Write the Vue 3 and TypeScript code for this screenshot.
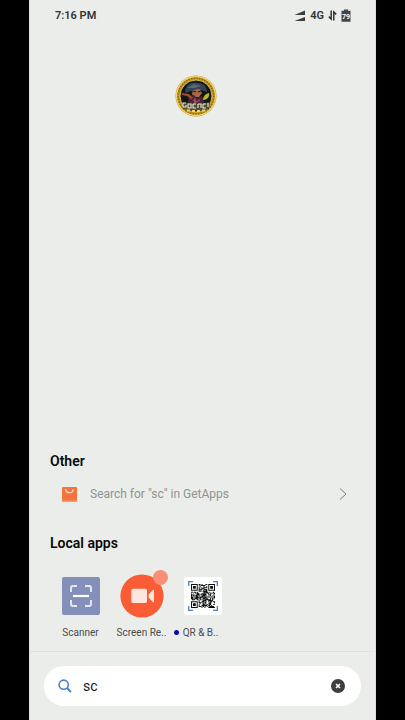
<script setup lang="ts">
import { ref } from 'vue'

const query = ref('sc')

const SIZE = 25

function finderModule(x: number, y: number): boolean | null {
  const corners = [[0, 0], [SIZE - 7, 0], [0, SIZE - 7]]
  for (const [cx, cy] of corners) {
    const dx = x - cx
    const dy = y - cy
    if (dx >= -1 && dx <= 7 && dy >= -1 && dy <= 7) {
      const ring = Math.max(Math.abs(dx - 3), Math.abs(dy - 3))
      return ring === 3 || ring <= 1
    }
  }
  return null
}

function buildQrPath(): string {
  let seed = 77
  let path = ''
  for (let y = 0; y < SIZE; y++) {
    for (let x = 0; x < SIZE; x++) {
      seed = (seed * 1103515245 + 12345) % 2147483648
      const finder = finderModule(x, y)
      const dark = finder === null ? seed / 2147483648 < 0.6 : finder
      if (dark) path += `M${x} ${y}h1v1h-1z`
    }
  }
  return path
}

const qrPath = buildQrPath()
</script>

<template>
  <div class="stage">
    <main class="phone">
      <header class="status">
        <span class="time">7:16 PM</span>
        <div class="indicators">
          <svg class="signal" viewBox="0 0 12 12" aria-hidden="true">
            <path d="M0.5 5L11 0.5V5zM0.5 11L11 7V11z" fill="#3b3e3c" />
          </svg>
          <span>4G</span>
          <svg class="data" viewBox="0 0 9 11" aria-hidden="true">
            <path d="M3.2 0.5V9L0.8 6.6M5.8 10.5V2L8.2 4.4" fill="none" stroke="#303331" stroke-width="1.5" />
          </svg>
          <svg class="battery" viewBox="0 0 10 13" aria-hidden="true">
            <path d="M3 0.5h4v1.300h2.500v11h-9v-11H3z" fill="#414442" />
            <text x="5" y="9.8" text-anchor="middle" font-size="7" font-weight="700" fill="#fff">79</text>
          </svg>
        </div>
      </header>

      <div class="emblem-row">
        <svg class="emblem" viewBox="0 0 42 42" role="img" aria-label="Emblem">
          <circle cx="21" cy="21" r="20.5" fill="#c89b25" />
          <circle cx="21" cy="21" r="19.5" fill="none" stroke="#ecd373" stroke-width="1.3" />
          <circle cx="21" cy="21" r="17.8" fill="none" stroke="#8e6a18" stroke-width="1.6" stroke-dasharray="1.5 1.2" />
          <circle cx="21" cy="21" r="16" fill="#111714" stroke="#ddb94b" />
          <path d="M10 16c1-7 7-10 13-8 6 0 9 4 9 9l-6-2-5 2-6-1-4 2z" fill="#344457" />
          <path d="M12 13l7-4 7 2-6 2z" fill="#596777" />
          <path d="M18 15l7-1 2 4-3 4h-5l-2-3z" fill="#a96a48" />
          <path d="M18 16l3 1M23 17l3-1" stroke="#231914" stroke-width="1.3" />
          <path d="M14 21l5-1 3 3 5-2 2 6-3 5H16l-3-5z" fill="#4b243c" />
          <path d="M7 18l7 1 4 4-2 1-4-3-5-1z" fill="#a44b29" />
          <path d="M28 25c0-3 2-6 6-7 1 4-2 7-6 7z" fill="#b8b735" />
          <path d="M18 25l3 2 4-2M20 23v6" fill="none" stroke="#c45a58" />
          <path d="M7 27q14 3 28 0l-1 7q-13 3-26 0z" fill="#4d4a38" />
          <path d="M8 28v4M8 28h3M8 32h3v-2M13 29h3v4h-3zM18 29v4h3M18 29h3M23 29v4M23 29h3v4M28 29h3M28 29v4h3M33 28v4" fill="none" stroke="#f2edcb" stroke-width="1.1" />
          <path d="M12 35.5h3M17 36h3M22 36h3M27 35.5h3" stroke="#f0d568" stroke-width="2" />
        </svg>
      </div>

      <section class="group other">
        <h2>Other</h2>
        <a class="store" href="#getapps">
          <svg class="bag" viewBox="0 0 15 15" aria-hidden="true">
            <rect width="15" height="15" rx="1" fill="#f5733d" />
            <path d="M0 13.5h15V14a1 1 0 0 1-1 1H1a1 1 0 0 1-1-1z" fill="#fa9a6c" />
            <path d="M3.8 2.5c0 4.3 7.4 4.3 7.4 0" fill="none" stroke="#ffe3d1" stroke-width="1.2" stroke-linecap="round" />
          </svg>
          <span class="store-text">Search for "sc" in GetApps</span>
          <svg class="chevron" viewBox="0 0 8 12" aria-hidden="true">
            <path d="M1 0.5L7 6L1 11.5" fill="none" stroke="#7d807e" />
          </svg>
        </a>
      </section>

      <section class="group local">
        <h2>Local apps</h2>
        <div class="apps">
          <button class="app" type="button">
            <span class="icon-slot">
              <svg class="tile" viewBox="0 0 38 38" aria-hidden="true">
                <rect width="38" height="38" rx="2" fill="#8490b9" />
                <path d="M9 15v-4q0-2 2-2h4M23 9h4q2 0 2 2v4M29 23v4q0 2-2 2h-4M15 29h-4q-2 0-2-2v-4" fill="none" stroke="#e1e7f6" stroke-width="2" />
                <path d="M11 19h16" stroke="#fff" stroke-width="2.2" />
              </svg>
            </span>
            <span class="label">Scanner</span>
          </button>
          <button class="app" type="button">
            <span class="icon-slot">
              <svg class="round" viewBox="0 0 44 44" aria-hidden="true">
                <circle cx="22" cy="22" r="21.6" fill="#fa5c36" />
                <rect x="11.3" y="14.7" width="15.7" height="14.4" rx="1.8" fill="#ffe6dc" />
                <path d="M28.700 20.500l4-4.500q1.300-.8 1.300 1v10q0 1.800-1.300 1l-4-4.500z" fill="#ffe6dc" />
              </svg>
              <span class="badge"></span>
            </span>
            <span class="label">Screen Re..</span>
          </button>
          <button class="app" type="button">
            <span class="icon-slot">
              <svg class="tile" viewBox="0 0 38 38" aria-hidden="true">
                <rect width="38" height="38" rx="2" fill="#fff" />
                <path d="M4.700 9V4.700H9M29 4.700h4.300V9M33.300 29v4.300H29M9 33.300H4.700V29" fill="none" stroke="#5180bd" stroke-width="1.300" />
                <path :d="qrPath" fill="#0d0f0e" transform="translate(7 7) scale(0.960)" />
              </svg>
            </span>
            <span class="label fresh">QR &amp; B..</span>
          </button>
        </div>
      </section>

      <footer class="search-area">
        <form class="search" role="search" @submit.prevent>
          <svg class="lens" viewBox="0 0 14 14" aria-hidden="true">
            <circle cx="5.7" cy="5.7" r="4.6" fill="none" stroke="#4683ce" stroke-width="1.6" />
            <path d="M9 9l4 4" stroke="#4683ce" stroke-width="1.8" />
          </svg>
          <input v-model="query" type="text" aria-label="Search apps" />
          <button class="clear" type="button" aria-label="Clear search" @click="query = ''">
            <svg viewBox="0 0 14 14" aria-hidden="true">
              <circle cx="7" cy="7" r="7" fill="#3d3f3e" />
              <path d="M5 5l4 4M9 5l-4 4" stroke="#fff" stroke-width="1.6" />
            </svg>
          </button>
        </form>
      </footer>
    </main>
  </div>
</template>

<style>
body {
  background: #000;
}
</style>

<style scoped>
.stage {
  display: flex;
  min-height: 100vh;
  box-sizing: border-box;
  padding: 0 29px;
  background: #000;
  font-family: Roboto, "Liberation Sans", sans-serif;
  color: #111;
}

.phone {
  flex: 1;
  display: flex;
  flex-direction: column;
  min-width: 0;
  background: #ebedea;
  border: solid #dddfdd;
  border-width: 0 1px;
}

svg {
  display: block;
  flex: none;
}

.status {
  display: flex;
  justify-content: space-between;
  align-items: center;
  height: 31px;
  padding: 0 24px 0 25px;
  font-size: 11px;
  font-weight: 600;
  color: #303331;
}

.indicators {
  display: flex;
  align-items: center;
  gap: 4px;
}

.signal {
  width: 12px;
  height: 12px;
}

.data {
  width: 9px;
  height: 11px;
}

.battery {
  width: 10px;
  height: 13px;
}

.emblem-row {
  flex: 1;
  display: flex;
  justify-content: center;
  align-items: flex-start;
  padding: 44px 14px 0 0;
}

.emblem {
  width: 42px;
  height: 42px;
}

.group {
  padding: 0 20px;
}

h2 {
  margin: 0;
  font-size: 14px;
  line-height: 20px;
  font-weight: 600;
  color: #080808;
}

.store {
  display: flex;
  align-items: center;
  height: 46px;
  padding: 0 8px 0 12px;
  color: #919492;
  font-size: 12px;
  text-decoration: none;
}

.bag {
  width: 15px;
  height: 15px;
}

.store-text {
  flex: 1;
  padding-left: 13px;
}

.chevron {
  width: 8px;
  height: 12px;
}

.local {
  padding-top: 16px;
}

.apps {
  display: flex;
  padding: 21px 0 10px;
}

.app {
  display: flex;
  flex-direction: column;
  align-items: center;
  width: 61px;
  padding: 0;
  border: 0;
  background: none;
  font: inherit;
  color: #4a4c4b;
}

.icon-slot {
  position: relative;
  display: flex;
  align-items: center;
  justify-content: center;
  height: 44px;
}

.tile {
  width: 38px;
  height: 38px;
}

.round {
  width: 44px;
  height: 44px;
}

.badge {
  position: absolute;
  top: -4px;
  right: -4px;
  width: 15px;
  height: 15px;
  border-radius: 50%;
  background: #fb8f76;
}

.label {
  position: relative;
  margin-top: 7px;
  font-size: 10px;
  line-height: 16px;
  white-space: nowrap;
}

.fresh {
  padding-right: 4px;
}

.fresh::before {
  content: "";
  position: absolute;
  top: 5px;
  left: -9px;
  width: 5px;
  height: 5px;
  border-radius: 50%;
  background: #0808b8;
}

.search-area {
  padding: 14px;
  border-top: 1px solid #dfe1df;
}

.search {
  display: flex;
  align-items: center;
  height: 40px;
  box-sizing: border-box;
  padding: 0 16px 0 14px;
  border-radius: 20px;
  background: #fff;
}

.lens {
  width: 14px;
  height: 14px;
}

input {
  flex: 1;
  min-width: 0;
  margin: 0;
  padding: 0 11px;
  border: 0;
  outline: 0;
  background: none;
  font: inherit;
  font-size: 14px;
  color: #171717;
}

.clear {
  padding: 0;
  border: 0;
  background: none;
}

.clear svg {
  width: 14px;
  height: 14px;
}
</style>
